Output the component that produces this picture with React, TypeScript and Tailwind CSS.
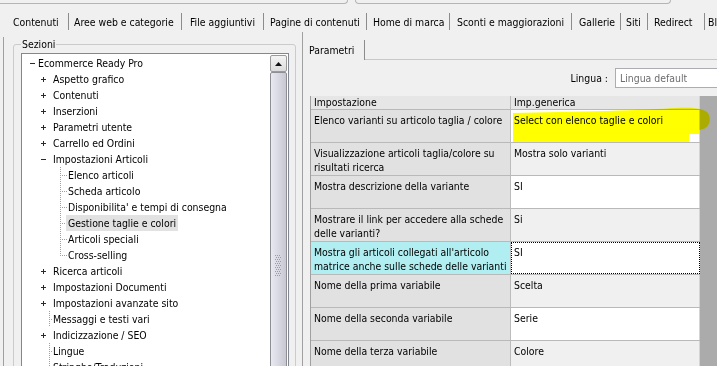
import React from "react";

const tabs = [
  { label: "Contenuti", cls: "w-[67px] pl-[11px]" },
  { label: "Aree web e categorie", cls: "w-[113px] pl-[5px]" },
  { label: "File aggiuntivi", cls: "w-[82px] pl-[8px]" },
  { label: "Pagine di contenuti", cls: "w-[103px] pl-[6px]" },
  { label: "Home di marca", cls: "w-[83px] pl-[6px]" },
  { label: "Sconti e maggiorazioni", cls: "w-[122px] pl-[7px]" },
  { label: "Gallerie", cls: "w-[49px] pl-[7px]" },
  { label: "Siti", cls: "w-[27px] pl-[5px]" },
  { label: "Redirect", cls: "w-[57px] pl-[6px]" },
];

type Node = { t: string; k: "root" | "plus" | "minus" | "child" | "leaf"; sel?: boolean; last?: boolean };

const tree: Node[] = [
  { t: "Ecommerce Ready Pro", k: "root" },
  { t: "Aspetto grafico", k: "plus" },
  { t: "Contenuti", k: "plus" },
  { t: "Inserzioni", k: "plus" },
  { t: "Parametri utente", k: "plus" },
  { t: "Carrello ed Ordini", k: "plus" },
  { t: "Impostazioni Articoli", k: "minus" },
  { t: "Elenco articoli", k: "child" },
  { t: "Scheda articolo", k: "child" },
  { t: "Disponibilita' e tempi di consegna", k: "child" },
  { t: "Gestione taglie e colori", k: "child", sel: true },
  { t: "Articoli speciali", k: "child" },
  { t: "Cross-selling", k: "child", last: true },
  { t: "Ricerca articoli", k: "plus" },
  { t: "Impostazioni Documenti", k: "plus" },
  { t: "Impostazioni avanzate sito", k: "plus" },
  { t: "Messaggi e testi vari", k: "leaf" },
  { t: "Indicizzazione / SEO", k: "plus" },
  { t: "Lingue", k: "leaf" },
  { t: "Stringhe/Traduzioni", k: "leaf" },
];

const rows = [
  { a: ["Elenco varianti su articolo taglia / colore"], b: "Select con elenco taglie e colori", bg: "bg-white" },
  { a: ["Visualizzazione articoli taglia/colore su", "risultati ricerca"], b: "Mostra solo varianti", bg: "bg-[#f0f0f0]" },
  { a: ["Mostra descrizione della variante"], b: "SI", bg: "bg-white" },
  { a: ["Mostrare il link per accedere alla schede", "delle varianti?"], b: "Si", bg: "bg-[#f0f0f0]" },
  { a: ["Mostra gli articoli collegati all'articolo", "matrice anche sulle schede delle varianti"], b: "SI", bg: "bg-white", focus: true },
  { a: ["Nome della prima variabile"], b: "Scelta", bg: "bg-[#f0f0f0]" },
  { a: ["Nome della seconda variabile"], b: "Serie", bg: "bg-white" },
  { a: ["Nome della terza variabile"], b: "Colore", bg: "bg-[#f0f0f0]" },
];

function Expander({ open }: { open: boolean }) {
  return (
    <svg width="9" height="9" viewBox="0 0 9 9" className="shrink-0" shapeRendering="crispEdges">
      <path d="M2 4.5H7" stroke="#2a2a2a" />
      {!open && <path d="M4.5 2V7" stroke="#2a2a2a" />}
    </svg>
  );
}

function Dots({ w, vx, last, hx }: { w: number; vx: number; last?: boolean; hx: number }) {
  return (
    <svg width={w} height="16" viewBox={`0 0 ${w} 16`} className="shrink-0" shapeRendering="crispEdges">
      <path d={`M${vx + 0.5} 0V${last ? 8 : 16}`} stroke="#a0a0a0" strokeDasharray="1 1" />
      <path d={`M${vx} 8.5H${hx}`} stroke="#a0a0a0" strokeDasharray="1 1" />
    </svg>
  );
}

function TreeRow({ n }: { n: Node }) {
  if (n.k === "root")
    return (
      <div className="flex h-[16px] items-center pl-[6px]">
        <Expander open />
        <span className="ml-[1px] whitespace-nowrap">{n.t}</span>
      </div>
    );
  if (n.k === "plus" || n.k === "minus")
    return (
      <div className="flex h-[16px] items-center pl-[17px]">
        <Expander open={n.k === "minus"} />
        <span className="ml-[5px] whitespace-nowrap">{n.t}</span>
      </div>
    );
  if (n.k === "leaf")
    return (
      <div className="flex h-[16px] items-center pl-[21px]">
        <Dots w={10} vx={6} hx={10} />
        <span className="whitespace-nowrap">{n.t}</span>
      </div>
    );
  return (
    <div className="flex h-[16px] items-center pl-[37px]">
      <Dots w={9} vx={1} hx={8} last={n.last} />
      <span className={`whitespace-nowrap px-[2px] -ml-[2px] leading-[16px] ${n.sel ? "bg-[#e2e2e2]" : ""}`}>{n.t}</span>
    </div>
  );
}

function Grip() {
  const dots = [];
  for (let r = 0; r < 11; r++) {
    for (let c = 0; c < 3; c++) {
      dots.push(<rect key={`${r}-${c}`} x={c * 2 + (r % 2)} y={r * 2} width="1" height="1" fill="#9a9ba6" />);
    }
  }
  return (
    <svg width="7" height="22" viewBox="0 0 7 22">
      {dots}
    </svg>
  );
}

export default function App() {
  return (
    <div className="w-[717px] h-[366px] overflow-hidden bg-[#f0f0f0] text-black text-[10.4px] leading-[14px] font-['DejaVu_Sans_Condensed','DejaVu_Sans',sans-serif]">
      {/* bottoms of the boxes above */}
      <div className="flex h-[10px]">
        <div className="h-[4px] w-[348px] border-b border-r border-[#b4b4b4] rounded-br-[5px]" />
        <div className="ml-[7px] h-[4px] w-[316px] border-b border-l border-r border-[#b4b4b4] rounded-b-[5px]" />
      </div>

      {/* main tabs */}
      <div className="flex h-[22px] pl-[2px]">
        {tabs.map(t => (
          <div key={t.label} className={`flex h-full shrink-0 items-center ${t.cls}`}>
            <span className="flex-1 overflow-hidden whitespace-nowrap pt-[2px]">{t.label}</span>
            <span className="h-[17px] w-px bg-[#8c8c8c]" />
          </div>
        ))}
        <div className="flex h-full items-center overflow-hidden pl-[3px] pt-[2px] whitespace-nowrap">Blog</div>
      </div>

      <div className="flex h-[334px]">
        {/* left: sections tree */}
        <div className="w-[298px] shrink-0 pl-[3px]">
          <div className="h-full border-l border-[#a0a0a0]">
            <fieldset className="ml-[9px] mt-[5px] h-[340px] w-[283px] rounded-[3px] border border-[#cbcbcb] pl-[7px] pr-[6px] pt-[2px]">
              <legend className="px-[1px] leading-[14px]">Sezioni</legend>
              <div className="flex h-[320px] w-[268px] border border-[#828790] bg-white pt-[1px] pr-[1px]">
                <div className="flex-1 overflow-hidden">
                  {tree.map(n => (
                    <TreeRow key={n.t} n={n} />
                  ))}
                </div>
                <div className="flex w-[17px] shrink-0 flex-col overflow-hidden">
                  <div className="flex h-[17px] shrink-0 items-center justify-center rounded-[2px] border border-[#9a9a9a] bg-gradient-to-b from-[#f4f4f4] to-[#dcdcdc]">
                    <svg width="7" height="4" viewBox="0 0 7 4">
                      <path d="M0 4L3.5 0L7 4Z" fill="#111" />
                    </svg>
                  </div>
                  <div className="flex h-[388px] shrink-0 items-center justify-center rounded-[2px] border border-[#8d8e96] bg-gradient-to-r from-[#e8e9f1] to-[#c7c8d2]">
                    <Grip />
                  </div>
                </div>
              </div>
            </fieldset>
          </div>
        </div>

        {/* right: parameters */}
        <div className="flex-1 pl-[4px]">
          <div className="flex h-full flex-col overflow-hidden border-l border-[#a0a0a0]">
            <div className="mt-[8px] flex h-[20px] shrink-0">
              <div className="flex w-[62px] items-center border-r border-[#8c8c8c] pl-[6px]">Parametri</div>
              <div className="flex-1 border-b border-[#c8c8c8]" />
            </div>

            <div className="mt-[8px] flex h-[20px] shrink-0 items-center">
              <div className="w-[305px] shrink-0 text-right">Lingua :</div>
              <div className="ml-[7px] flex h-[20px] w-[110px] shrink-0 items-center border border-[#abadb3] bg-white pl-[4px] text-[#6d6d6d]">
                Lingua default
              </div>
            </div>

            <div className="relative mt-[8px] ml-[7px] flex-1 border-l border-[#a0a0a0] bg-[#ababab]">
              <div className="flex h-[14px] w-[389px] border-b border-[#b9b9b9] bg-[#e6e6e6] leading-[13px]">
                <div className="w-[200px] border-r border-[#bcbcbc] pl-[3px]">Impostazione</div>
                <div className="w-[189px] border-r border-[#d4d4d4] pl-[3px]">Imp.generica</div>
              </div>
              {rows.map((r, i) => (
                <div key={i} className="flex h-[33px] w-[389px] border-b border-[#b9b9b9]">
                  <div className={`w-[200px] overflow-hidden border-r border-[#bcbcbc] pl-[3px] pt-[3px] ${r.focus ? "bg-[#b0eef2]" : "bg-[#e1e1e1]"}`}>
                    {r.a.map(l => (
                      <div key={l} className="whitespace-nowrap">{l}</div>
                    ))}
                  </div>
                  {r.focus ? (
                    <div className="w-[189px] border border-dotted border-black bg-white pl-[2px] pt-[2px]">{r.b}</div>
                  ) : (
                    <div className={`w-[189px] border-r border-[#d4d4d4] pl-[3px] pt-[3px] ${r.bg}`}>{r.b}</div>
                  )}
                </div>
              ))}

              {/* highlighter mark over the first value */}
              <svg
                width="200"
                height="40"
                viewBox="0 0 200 40"
                className="pointer-events-none absolute left-[200px] top-[9px] mix-blend-multiply blur-[0.7px]"
              >
                <path
                  d="M2 8C60 7 140 5 165 3C185 2 196 4 198 10C200 16 198 22 192 24L188 25L188 29L178 29L178 37L2 37Z"
                  fill="#ffff00"
                />
              </svg>
            </div>
          </div>
        </div>
      </div>
    </div>
  );
}
